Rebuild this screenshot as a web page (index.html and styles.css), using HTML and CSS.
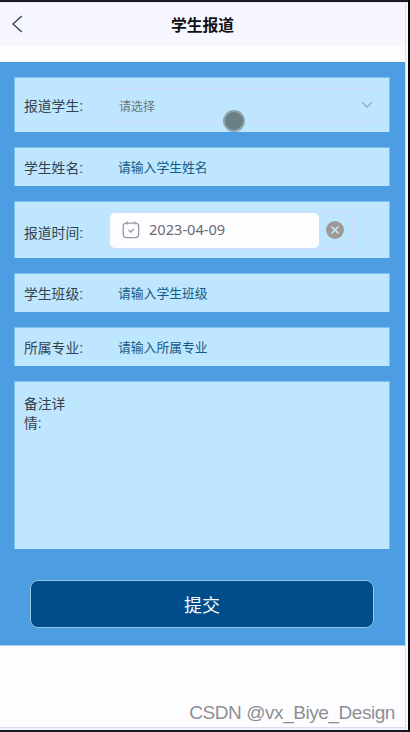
FILE: index.html
```html
<!DOCTYPE html>
<html lang="zh-CN">
<head>
<meta charset="utf-8">
<title>学生报道</title>
<link rel="stylesheet" href="styles.css">
</head>
<body>
<div class="phone">
  <header class="navbar">
    <svg class="back" width="12" height="18" viewBox="0 0 12 18"><path d="M10.800 1 2 9l8.800 8"/></svg>
    <h1 class="title">学生报道</h1>
  </header>
  <main class="form">
    <div class="row row-select">
      <span class="label">报道学生:</span>
      <div class="select">
        <span>请选择</span>
        <svg width="12" height="8" viewBox="0 0 12 8"><path d="m1.200 1.200 4.800 4.800 4.800-4.800"/></svg>
      </div>
      <i class="touch"></i>
    </div>
    <div class="row"><span class="label">学生姓名:</span><span class="placeholder">请输入学生姓名</span></div>
    <div class="row row-date">
      <span class="label">报道时间:</span>
      <div class="date">
        <div class="date-value">
          <svg class="calendar" width="18" height="18" viewBox="0 0 18 18"><rect x="1.200" y="2.200" width="15.400" height="14.400" rx="3"/><path d="M5.200.5v3M12.700.5v3M6.500 9l2.200 2 3-3"/></svg>
          <span>2023-04-09</span>
        </div>
        <svg class="clear" width="18" height="18" viewBox="0 0 18 18"><circle cx="9" cy="9" r="9"/><path d="m5.500 5.500 7 7m0-7-7 7"/></svg>
      </div>
    </div>
    <div class="row"><span class="label">学生班级:</span><span class="placeholder">请输入学生班级</span></div>
    <div class="row"><span class="label">所属专业:</span><span class="placeholder">请输入所属专业</span></div>
    <div class="row row-note"><span class="label label-note">备注详情:</span></div>
    <button class="submit">提交</button>
  </main>
  <footer class="watermark">CSDN @vx_Biye_Design</footer>
</div>
</body>
</html>
```
FILE: styles.css
```css
* { box-sizing: border-box; }
body {
  margin: 0;
  background: #05050a;
  font-family: "Noto Sans", "Noto Sans CJK SC", sans-serif;
}
svg { fill: none; flex: none; }
.phone {
  display: flex;
  flex-direction: column;
  width: 408px;
  height: 732px;
  border-top: 2px solid #1c1a29;
  border-bottom: 2px solid #1c1a29;
  background: linear-gradient(90deg, transparent 405px, #dcdcee 405px, #dcdcee 406px, #f8f8ff 406px), linear-gradient(#fdfdff 725px, #dcdcee 725px, #dcdcee 726px, #f1f1fa 726px);
}
.navbar {
  display: flex;
  align-items: center;
  width: 405px;
  height: 44px;
  padding-left: 11px;
  border-top: 1px solid #e6e6f0;
  background: #f7f7ff;
}
.back { stroke: #3d454b; stroke-width: 1.4; margin-bottom: 2px; }
.title {
  flex: 1;
  margin: 0 23px 0 0;
  font: 700 15.8px/22px "Noto Sans CJK SC", sans-serif;
  text-align: center;
  color: #101116;
}
.form {
  display: flex;
  flex-direction: column;
  gap: 15px;
  width: 405px;
  height: 584px;
  margin-top: 16px;
  padding: 15px 15px 0 14px;
  background: #4c9de1;
  border-bottom: 1px solid #a5cff1;
}
.row {
  position: relative;
  display: flex;
  align-items: center;
  height: 39px;
  flex: none;
  padding-left: 9px;
  border: 1px solid #7cc2ed;
  border-bottom: 0;
  background: #bee6ff;
}
.row-select { height: 55px; }
.row-date { height: 57px; }
.row-note { height: 168px; align-items: flex-start; padding-top: 11px; }
.label {
  width: 85px;
  padding-top: 2px;
  font-family: "Liberation Sans", "Noto Sans CJK SC", sans-serif;
  font-size: 13.8px;
  line-height: 19px;
  color: #34424b;
}
.label-note { width: 56px; }
.row-date .label { padding-top: 6px; }
.placeholder {
  padding: 0 0 2px 9px;
  font-family: "Noto Sans CJK SC", sans-serif;
  font-size: 12.8px;
  line-height: 19px;
  color: #155985;
}
.select {
  display: flex;
  align-items: center;
  justify-content: space-between;
  width: 271px;
  height: 35px;
  padding: 0 6px 0 9px;
  border: 1px solid #d4def4;
  border-radius: 5px;
  font-family: "Noto Sans CJK SC", sans-serif;
  font-size: 12px;
  color: #687780;
}
.select svg { stroke: #9cafc0; stroke-width: 1.3; }
.touch {
  position: absolute;
  left: 208px;
  top: 32px;
  width: 22px;
  height: 22px;
  border: 2px solid #8ba5ae;
  border-radius: 50%;
  background: #6b7f86;
}
.date {
  display: flex;
  align-items: center;
  width: 244px;
  height: 37px;
  border: 1px solid #d4def4;
  border-radius: 5px;
}
.date-value {
  display: flex;
  align-items: center;
  gap: 9px;
  width: 209px;
  height: 35px;
  padding-left: 12px;
  border-radius: 5px;
  background: #fdfdff;
  font-size: 14.6px;
  color: #676b72;
}
.date-value span { padding-bottom: 2px; }
.calendar { stroke: #9798a2; stroke-width: 1.3; }
.clear { margin-left: 7px; }
.clear circle { fill: #9d9996; }
.clear path { stroke: #cceaff; stroke-width: 1.5; }
.submit {
  flex: none;
  width: 344px;
  height: 48px;
  margin: 16px 0 0 16px;
  padding: 0;
  border: 1px solid #94c6df;
  border-radius: 8px;
  background: #004d8a;
  color: #f5faff;
  font: 18px/26px "Noto Sans CJK SC", sans-serif;
}
.watermark {
  width: 405px;
  margin-top: auto;
  padding: 0 10px 5px 0;
  font: 19px/24px "Liberation Sans", sans-serif;
  letter-spacing: -0.45px;
  text-align: right;
  white-space: nowrap;
  color: #8e8e92;
}
```
